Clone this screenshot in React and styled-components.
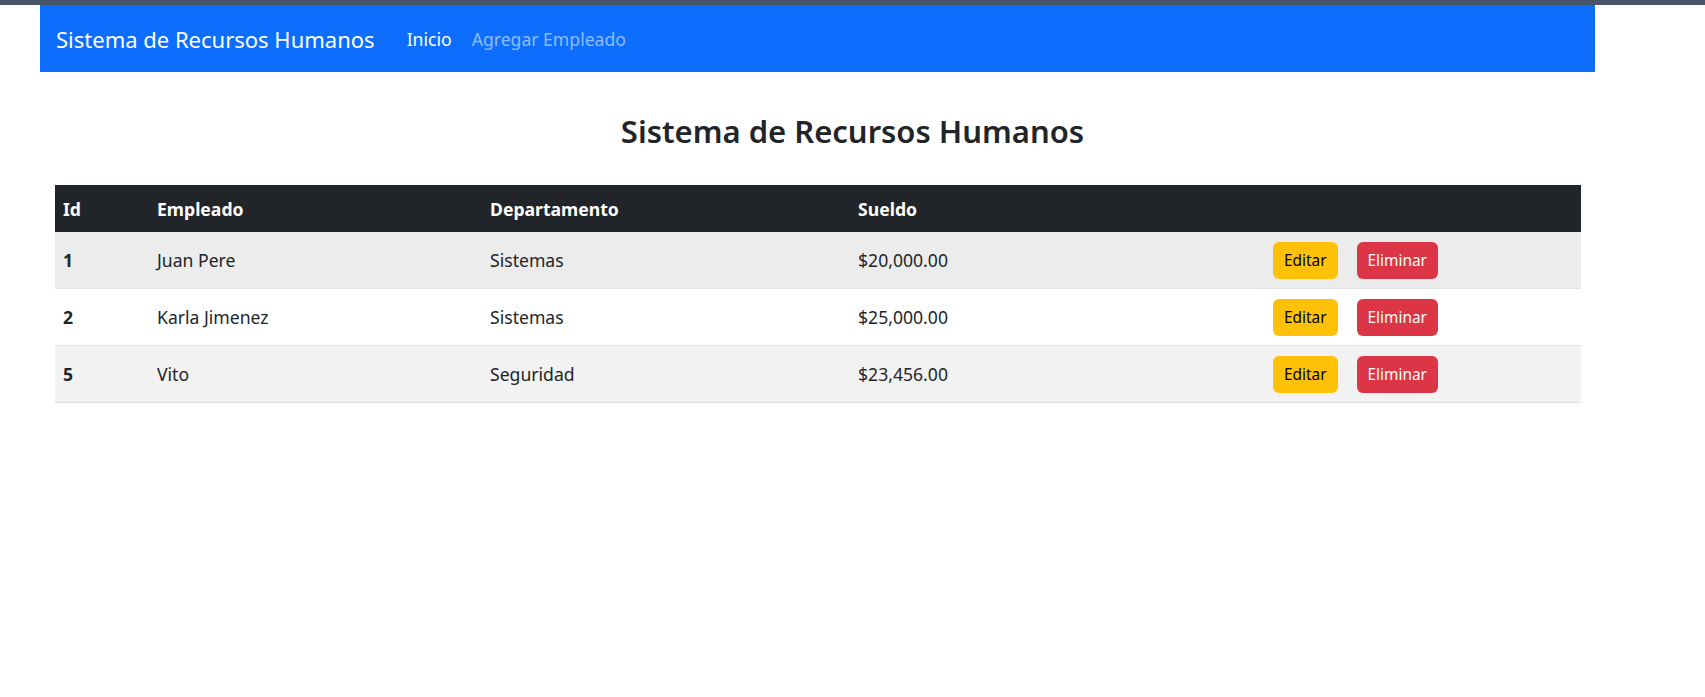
import React from 'react';
import styled, { createGlobalStyle } from 'styled-components';

const GlobalStyle = createGlobalStyle`
  body {
    margin: 0;
    background: #fff;
    font-family: "Noto Sans", "Open Sans", sans-serif;
    color: #212529;
  }
`;

const empleados = [
  { id: 1, nombre: 'Juan Pere', depto: 'Sistemas', sueldo: 20000 },
  { id: 2, nombre: 'Karla Jimenez', depto: 'Sistemas', sueldo: 25000 },
  { id: 5, nombre: 'Vito', depto: 'Seguridad', sueldo: 23456 },
];

const formato = (n) =>
  '$' + n.toLocaleString('en-US', { minimumFractionDigits: 2, maximumFractionDigits: 2 });

const TopStrip = styled.div`
  height: 5px;
  background: #485569;
`;

const Navbar = styled.nav`
  margin-left: 40px;
  width: 1555px;
  height: 67px;
  background: #0d6efd;
  display: flex;
  align-items: center;
  padding: 0 16px;
  box-sizing: border-box;
`;

const Brand = styled.a`
  font-size: 22px;
  color: #fff;
  margin-right: 22px;
  text-decoration: none;
`;

const NavLink = styled.a`
  font-size: 17.6px;
  color: ${(p) => (p.$active ? '#fff' : 'rgba(255,255,255,0.55)')};
  padding: 0 10px;
  text-decoration: none;
`;

const Titulo = styled.h2`
  margin: 0;
  padding-top: 39px;
  height: 113px;
  box-sizing: border-box;
  text-align: center;
  font-size: 31px;
  font-weight: 600;
  line-height: 40px;
`;

const Tabla = styled.table`
  margin-left: 55px;
  width: 1526px;
  border-collapse: collapse;
  table-layout: fixed;
  font-size: 17.6px;
`;

const Th = styled.th`
  height: 47px;
  padding: 0 8px;
  text-align: left;
  background: #212529;
  color: #fff;
  font-weight: 700;
`;

const Fila = styled.tr`
  background: ${(p) => p.$bg};
  border-bottom: 1px solid #dee2e6;
`;

const Td = styled.td`
  height: 56px;
  padding: 0 8px;
  font-weight: ${(p) => (p.$bold ? 700 : 400)};
`;

const Acciones = styled.div`
  display: flex;
  gap: 19px;
`;

const Boton = styled.button`
  height: 37px;
  padding: 0 11px;
  border: none;
  border-radius: 6px;
  font-family: inherit;
  font-size: 15.4px;
  background: ${(p) => (p.$tipo === 'warning' ? '#ffc107' : '#dc3545')};
  color: ${(p) => (p.$tipo === 'warning' ? '#000' : '#fff')};
`;

const fondos = ['#ececec', '#ffffff', '#f2f2f2'];

export default function App() {
  return (
    <>
      <GlobalStyle />
      <TopStrip />
      <Navbar>
        <Brand href="#">Sistema de Recursos Humanos</Brand>
        <NavLink $active href="#">Inicio</NavLink>
        <NavLink href="#">Agregar Empleado</NavLink>
      </Navbar>
      <Titulo>Sistema de Recursos Humanos</Titulo>
      <Tabla>
        <colgroup>
          <col style={{ width: 94 }} />
          <col style={{ width: 333 }} />
          <col style={{ width: 368 }} />
          <col style={{ width: 415 }} />
          <col style={{ width: 316 }} />
        </colgroup>
        <thead>
          <tr>
            <Th>Id</Th>
            <Th>Empleado</Th>
            <Th>Departamento</Th>
            <Th>Sueldo</Th>
            <Th></Th>
          </tr>
        </thead>
        <tbody>
          {empleados.map((e, i) => (
            <Fila key={e.id} $bg={fondos[i]}>
              <Td $bold>{e.id}</Td>
              <Td>{e.nombre}</Td>
              <Td>{e.depto}</Td>
              <Td>{formato(e.sueldo)}</Td>
              <Td>
                <Acciones>
                  <Boton $tipo="warning">Editar</Boton>
                  <Boton $tipo="danger">Eliminar</Boton>
                </Acciones>
              </Td>
            </Fila>
          ))}
        </tbody>
      </Tabla>
    </>
  );
}
